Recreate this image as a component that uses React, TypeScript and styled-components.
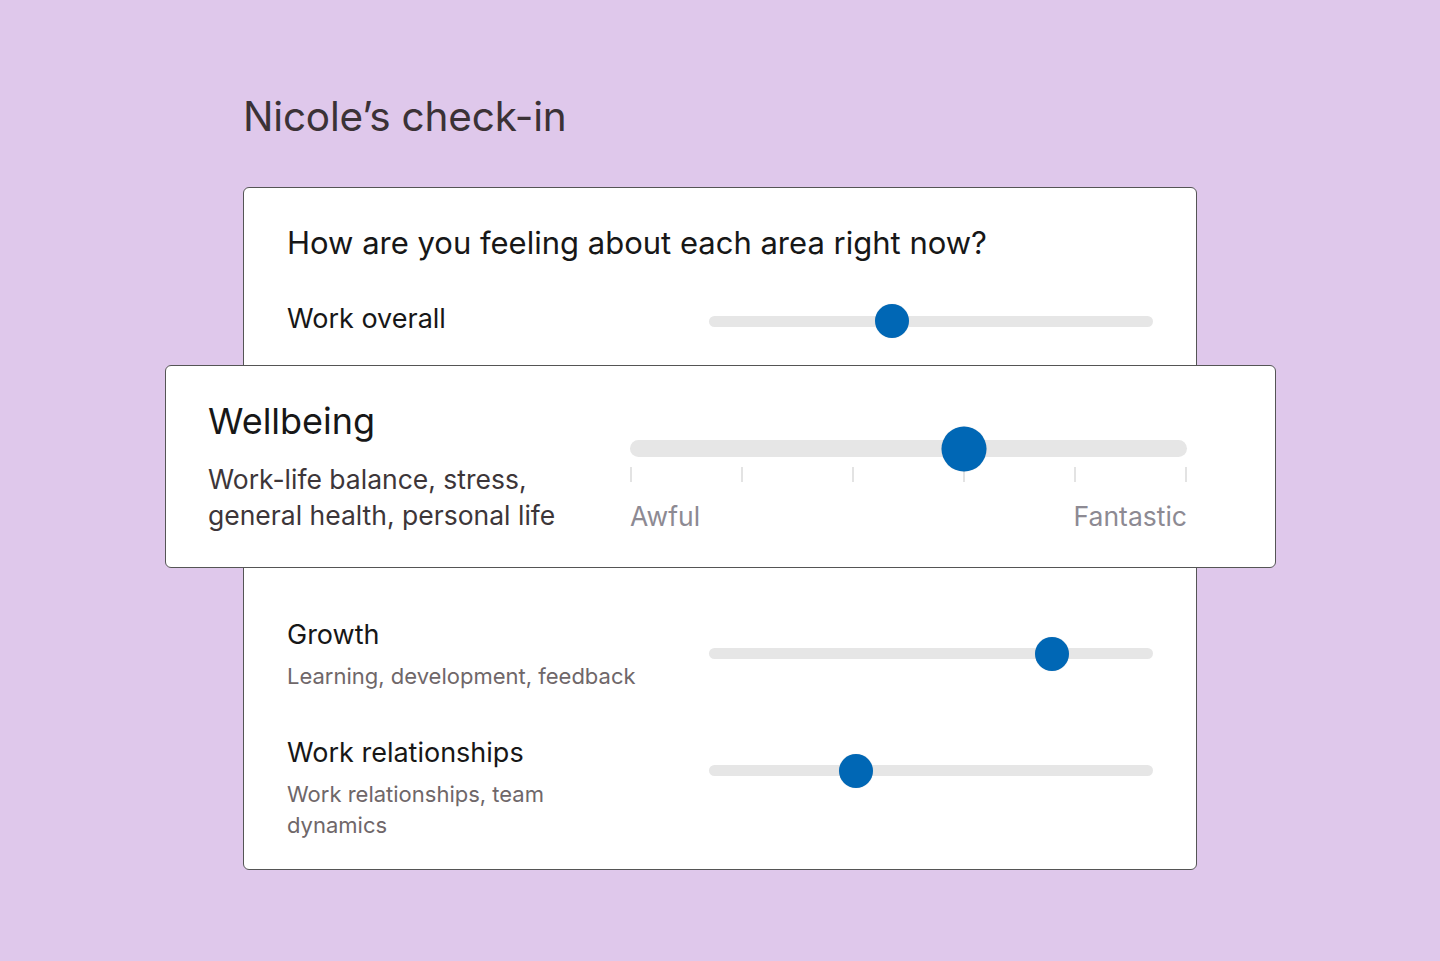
import React from 'react';
import styled, { createGlobalStyle } from 'styled-components';

const GlobalStyle = createGlobalStyle`
  html, body {
    margin: 0;
    padding: 0;
    background: #dfc8eb;
  }
  body {
    font-family: Inter, "Noto Sans", "Liberation Sans", sans-serif;
    -webkit-font-smoothing: antialiased;
  }
`;

const Page = styled.main`
  min-height: 961px;
  box-sizing: border-box;
  padding: 93px 0 0 243px;
`;

const PageTitle = styled.h1`
  margin: 0 0 46px;
  font-size: 40.5px;
  line-height: 48px;
  font-weight: 400;
  color: #3b3236;
  letter-spacing: -0.2px;
`;

const Card = styled.section`
  width: 954px;
  box-sizing: border-box;
  background: #fff;
  border: 1.5px solid #555;
  border-radius: 6px;
  padding: 36px 43px 28px;
`;

const Question = styled.h2`
  margin: 0 0 40px;
  font-size: 31px;
  line-height: 38px;
  font-weight: 400;
  color: #171717;
`;

const Row = styled.div<{ $align?: 'center' | 'start' }>`
  display: flex;
  align-items: ${p => (p.$align === 'start' ? 'flex-start' : 'center')};
  margin-bottom: ${p => (p.$align === 'start' ? '44px' : '0')};

  &:last-child {
    margin-bottom: 0;
  }
`;

const Labels = styled.div`
  width: 422px;
  flex-shrink: 0;
`;

const Name = styled.div<{ $big?: boolean }>`
  font-size: ${p => (p.$big ? '36px' : '27px')};
  line-height: ${p => (p.$big ? '44px' : '34px')};
  color: #171717;
`;

const Desc = styled.div<{ $big?: boolean }>`
  max-width: ${p => (p.$big ? '360px' : '350px')};
  margin-top: ${p => (p.$big ? '18px' : '9px')};
  font-size: ${p => (p.$big ? '26.5px' : '22px')};
  line-height: ${p => (p.$big ? '36px' : '31px')};
  color: ${p => (p.$big ? '#3d3639' : '#6f6769')};
`;

const SliderArea = styled.div<{ $offset?: number }>`
  flex: 1;
  margin-top: ${p => p.$offset ?? 0}px;
`;

const Track = styled.div<{ $big?: boolean }>`
  position: relative;
  height: ${p => (p.$big ? '17px' : '11px')};
  border-radius: 10px;
  background: #e6e6e6;
`;

const Thumb = styled.div<{ $big?: boolean }>`
  position: absolute;
  top: 50%;
  width: ${p => (p.$big ? '45px' : '34px')};
  height: ${p => (p.$big ? '45px' : '34px')};
  border-radius: 50%;
  background: #0067b5;
  transform: translate(-50%, -50%);
  box-shadow: 0 0 1px rgba(0, 0, 0, 0.15);
`;

const Ticks = styled.div`
  display: flex;
  justify-content: space-between;
  margin-top: 10px;
`;

const Tick = styled.span`
  width: 2px;
  height: 15px;
  background: #e3e3e3;
`;

const Scale = styled.div`
  display: flex;
  justify-content: space-between;
  margin-top: 16px;
  font-size: 26.5px;
  line-height: 36px;
  color: #8d8a93;
`;

const Highlight = styled.div`
  display: flex;
  align-items: flex-start;
  margin: 29px -122.5px 0;
  padding: 33px 87.5px 33px 42.5px;
  background: #fff;
  border: 1.5px solid #555;
  border-radius: 6px;
`;

const Lower = styled.div`
  padding-top: 50px;
`;

type SliderProps = { value: number; big?: boolean; offset?: number; scale?: boolean };

const Slider: React.FC<SliderProps> = ({ value, big, offset, scale }) => (
  <SliderArea $offset={offset}>
    <Track $big={big}>
      <Thumb $big={big} style={{ left: `${value * 100}%` }} />
    </Track>
    {scale && (
      <>
        <Ticks>
          {Array.from({ length: 6 }).map((_, i) => (
            <Tick key={i} />
          ))}
        </Ticks>
        <Scale>
          <span>Awful</span>
          <span>Fantastic</span>
        </Scale>
      </>
    )}
  </SliderArea>
);

export default function App() {
  return (
    <>
      <GlobalStyle />
      <Page>
        <PageTitle>Nicole’s check-in</PageTitle>
        <Card>
          <Question>How are you feeling about each area right now?</Question>
          <Row>
            <Labels>
              <Name>Work overall</Name>
            </Labels>
            <Slider value={0.412} offset={4} />
          </Row>

          <Highlight>
            <Labels>
              <Name $big>Wellbeing</Name>
              <Desc $big>Work-life balance, stress, general health, personal life</Desc>
            </Labels>
            <Slider value={0.6} big scale offset={41} />
          </Highlight>

          <Lower>
            <Row $align="start">
              <Labels>
                <Name>Growth</Name>
                <Desc>Learning, development, feedback</Desc>
              </Labels>
              <Slider value={0.7725} offset={30} />
            </Row>
            <Row $align="start">
              <Labels>
                <Name>Work relationships</Name>
                <Desc>Work relationships, team dynamics</Desc>
              </Labels>
              <Slider value={0.331} offset={29} />
            </Row>
          </Lower>
        </Card>
      </Page>
    </>
  );
}
